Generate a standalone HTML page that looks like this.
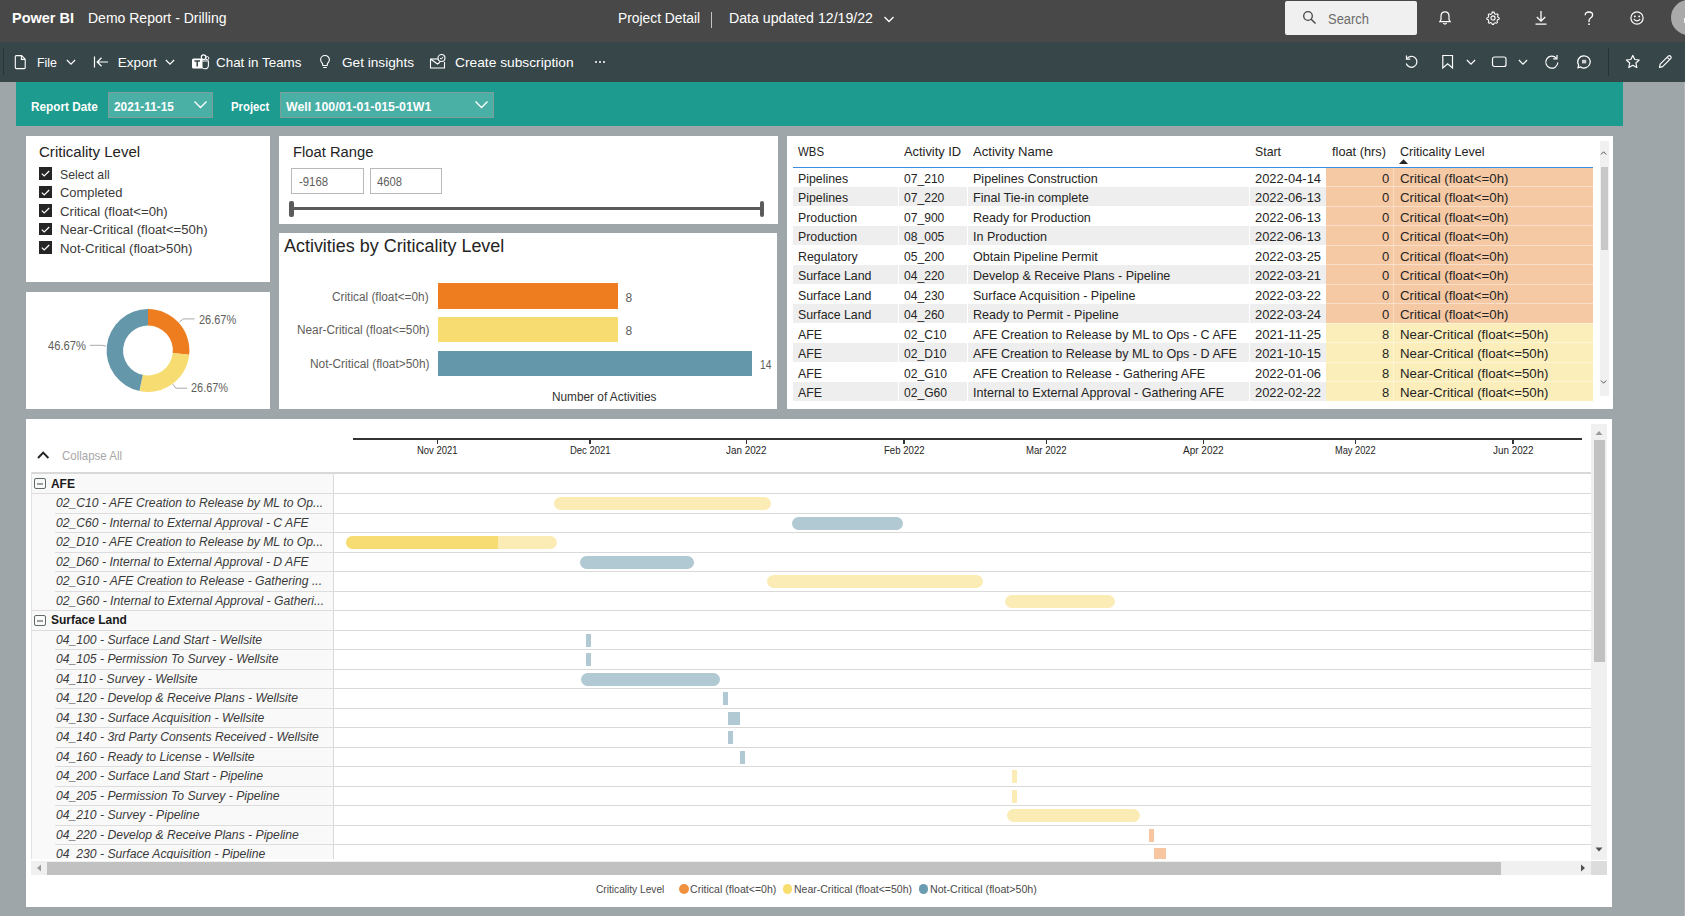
<!DOCTYPE html>
<html><head><meta charset="utf-8"><title>Power BI - Demo Report - Drilling</title>
<style>
html,body{margin:0;padding:0;}
body{width:1685px;height:916px;position:relative;overflow:hidden;background:#9ea6a9;font-family:"Liberation Sans",sans-serif;}
svg{position:absolute;overflow:visible;}
</style></head><body>
<div style="position:absolute;left:0px;top:0px;width:1685px;height:42px;background:#484848;"></div>
<div style="position:absolute;left:710.6px;top:12px;width:1.5px;height:15.5px;background:#c4c4c4;"></div>
<svg style="left:883px;top:14px" width="12" height="10"><path d="M1.5 3 L6 7.5 L10.5 3" fill="none" stroke="#fff" stroke-width="1.3"/></svg>
<div style="position:absolute;left:1285.3px;top:1.2px;width:131.7px;height:33.7px;background:#f0f0f0;border-radius:2px;"></div>
<svg style="left:1302px;top:10px" width="16" height="16"><circle cx="6" cy="6" r="4.3" fill="none" stroke="#444" stroke-width="1.3"/><path d="M9.2 9.2 L13.5 13.5" stroke="#444" stroke-width="1.4"/></svg>
<svg style="left:1437px;top:10px" width="16" height="16"><path d="M8 1.8 C5.2 1.8 4 3.8 4 6.2 L4 9.5 L2.8 11.6 L13.2 11.6 L12 9.5 L12 6.2 C12 3.8 10.8 1.8 8 1.8 Z" fill="none" stroke="#ffffff" stroke-width="1.2"/><path d="M6.3 13.2 Q8 15 9.7 13.2" fill="none" stroke="#ffffff" stroke-width="1.2"/></svg>
<svg style="left:1485px;top:10px" width="16" height="16" viewBox="-0.5 -0.5 17 17"><circle cx="8" cy="8" r="2.2" fill="none" stroke="#ffffff" stroke-width="1.2"/><path d="M8 1.5 L9.3 1.8 L9.6 3.4 L11 4.2 L12.5 3.6 L13.5 4.7 L12.9 6.2 L13.5 7.5 L14.6 8 L14.5 9.3 L12.9 9.8 L12.2 11.2 L12.8 12.7 L11.8 13.6 L10.3 13 L9 13.7 L8.6 15 L7.3 15 L6.9 13.6 L5.5 12.9 L4 13.6 L3 12.6 L3.6 11.1 L2.9 9.8 L1.4 9.3 L1.4 8 L2.9 7.4 L3.5 6 L2.9 4.6 L3.9 3.6 L5.4 4.2 L6.8 3.4 L7 1.8 Z" fill="none" stroke="#ffffff" stroke-width="1.1"/></svg>
<svg style="left:1533px;top:9px" width="16" height="18"><path d="M8 2 L8 12 M3.8 8 L8 12.2 L12.2 8 M2.5 15.2 L13.5 15.2" fill="none" stroke="#ffffff" stroke-width="1.3"/></svg>
<svg style="left:1582px;top:10px" width="14" height="16"><path d="M3.2 5.2 Q3.2 2 7 2 Q10.6 2 10.6 5 Q10.6 6.8 8.6 8 Q7 9 7 10.8 L7 12" fill="none" stroke="#ffffff" stroke-width="1.3"/><circle cx="7" cy="14.2" r="0.9" fill="#ffffff"/></svg>
<svg style="left:1629px;top:10px" width="17" height="17"><circle cx="8" cy="8" r="6.1" fill="none" stroke="#ffffff" stroke-width="1.2"/><circle cx="5.8" cy="6.4" r="0.9" fill="#ffffff"/><circle cx="10.2" cy="6.4" r="0.9" fill="#ffffff"/><path d="M4.8 9.2 Q8 12.6 11.2 9.2" fill="none" stroke="#ffffff" stroke-width="1.2"/></svg>
<div style="position:absolute;left:1670.8px;top:0.4px;width:35px;height:35px;border-radius:50%;background:#aaaaaa"></div>
<div style="position:absolute;left:1683.5px;top:18px;width:2px;height:5px;background:#f4f4f4;"></div>
<div style="position:absolute;left:0px;top:42px;width:1685px;height:40px;background:#374649;"></div>
<div style="position:absolute;left:3px;top:48px;width:1px;height:27px;background:#2a3437;"></div>
<svg style="left:14px;top:54px" width="14" height="16"><path d="M1.3 2.6 Q1.3 1.6 2.3 1.6 L7.6 1.6 L11.2 5.2 L11.2 13.6 Q11.2 14.6 10.2 14.6 L2.3 14.6 Q1.3 14.6 1.3 13.6 Z M7.4 1.6 L7.4 5.4 L11.2 5.4" fill="none" stroke="#ffffff" stroke-width="1.1"/></svg>
<svg style="left:65px;top:57px" width="12" height="10"><path d="M1.9 3 L6 7.2 L10.1 3" fill="none" stroke="#ffffff" stroke-width="1.15"/></svg>
<svg style="left:92px;top:55px" width="18" height="14"><path d="M2.5 1.5 L2.5 12.5 M16 7 L5 7 M9.5 2.8 L5.2 7 L9.5 11.2" fill="none" stroke="#ffffff" stroke-width="1.2"/></svg>
<svg style="left:164px;top:57px" width="12" height="10"><path d="M1.9 3 L6 7.2 L10.1 3" fill="none" stroke="#ffffff" stroke-width="1.15"/></svg>
<svg style="left:191px;top:53px" width="19" height="18"><circle cx="12.6" cy="4.2" r="2.3" fill="none" stroke="#ffffff" stroke-width="1.1"/><circle cx="16.2" cy="5.2" r="1.6" fill="none" stroke="#ffffff" stroke-width="1"/><path d="M10.5 8 L17.4 8 L17.4 12.2 Q17.4 15.8 14 15.8 Q11.6 15.8 10.6 14" fill="none" stroke="#ffffff" stroke-width="1.1"/><rect x="1" y="5.5" width="10.5" height="10" rx="1.5" fill="#ffffff"/><path d="M3.4 8 L9 8 M6.2 8 L6.2 13.5" stroke="#374649" stroke-width="1.5"/></svg>
<svg style="left:318px;top:54px" width="14" height="16"><path d="M7 1.5 C4.3 1.5 2.6 3.5 2.6 5.8 C2.6 7.6 3.7 8.6 4.5 9.6 L4.8 11.5 L9.2 11.5 L9.5 9.6 C10.3 8.6 11.4 7.6 11.4 5.8 C11.4 3.5 9.7 1.5 7 1.5 Z M5.2 13.5 L8.8 13.5" fill="none" stroke="#ffffff" stroke-width="1.1"/></svg>
<svg style="left:429px;top:53px" width="18" height="17"><path d="M1.5 6 L1.5 15 L15.5 15 L15.5 9 M1.5 6 L8.5 11 L11 9.2" fill="none" stroke="#ffffff" stroke-width="1.1"/><path d="M1.5 6 L9 6" stroke="#ffffff" stroke-width="1.1"/><circle cx="12.5" cy="5" r="3.5" fill="none" stroke="#ffffff" stroke-width="1.1"/><path d="M11 5 L12.3 6.2 L14.2 3.8" fill="none" stroke="#ffffff" stroke-width="1"/></svg>
<div style="position:absolute;left:595.2px;top:60.8px;width:2px;height:2px;background:#ffffff;border-radius:50%;"></div>
<div style="position:absolute;left:599.2px;top:60.8px;width:2px;height:2px;background:#ffffff;border-radius:50%;"></div>
<div style="position:absolute;left:603.2px;top:60.8px;width:2px;height:2px;background:#ffffff;border-radius:50%;"></div>
<svg style="left:1403px;top:54px" width="18" height="16"><path d="M4 4.5 A5.5 5.5 0 1 1 3.2 9.5" fill="none" stroke="#ffffff" stroke-width="1.2"/><path d="M3.5 1.5 L3.5 5.2 L7.2 5.2" fill="none" stroke="#ffffff" stroke-width="1.2"/></svg>
<svg style="left:1441px;top:54px" width="14" height="16"><path d="M1.8 1.5 L11.5 1.5 L11.5 14 L6.65 9.8 L1.8 14 Z" fill="none" stroke="#ffffff" stroke-width="1.2"/></svg>
<svg style="left:1465px;top:57px" width="12" height="10"><path d="M1.9 3 L6 7.2 L10.1 3" fill="none" stroke="#ffffff" stroke-width="1.15"/></svg>
<svg style="left:1491px;top:55px" width="18" height="14"><rect x="1.5" y="2" width="13.5" height="9.5" rx="2" fill="none" stroke="#ffffff" stroke-width="1.2"/></svg>
<svg style="left:1517px;top:57px" width="12" height="10"><path d="M1.9 3 L6 7.2 L10.1 3" fill="none" stroke="#ffffff" stroke-width="1.15"/></svg>
<svg style="left:1544px;top:54px" width="16" height="16"><path d="M12.3 4.2 A6 6 0 1 0 13.8 8.5" fill="none" stroke="#ffffff" stroke-width="1.2"/><path d="M13 1 L13 4.8 L9.2 4.8" fill="none" stroke="#ffffff" stroke-width="1.2"/></svg>
<svg style="left:1576px;top:54px" width="16" height="16"><path d="M8 1.8 A6.1 6.1 0 1 1 4.6 12.9 L1.8 13.9 L2.7 11.2 A6.1 6.1 0 0 1 8 1.8 Z" fill="none" stroke="#ffffff" stroke-width="1.2" stroke-linejoin="round"/><rect x="6" y="5.8" width="4.2" height="3.6" fill="#cfcfcf"/></svg>
<div style="position:absolute;left:1608px;top:48px;width:1px;height:27.5px;background:#283336;"></div>
<svg style="left:1624px;top:53px" width="18" height="17"><path d="M8.8 2.4 L10.8 6.5 L15.2 7 L11.9 10 L12.8 14.5 L8.8 12.3 L4.8 14.5 L5.7 10 L2.4 7 L6.8 6.5 Z" fill="none" stroke="#ffffff" stroke-width="1.2" stroke-linejoin="round"/></svg>
<svg style="left:1657px;top:54px" width="16" height="16"><path d="M2.5 13.5 L3.2 10.2 L11.5 1.9 Q12.5 1.2 13.6 2.2 Q14.6 3.3 13.9 4.3 L5.6 12.6 Z M10.2 3.3 L12.6 5.7" fill="none" stroke="#ffffff" stroke-width="1.2" stroke-linejoin="round"/></svg>
<div style="position:absolute;left:16px;top:82px;width:1607px;height:44px;background:#1c9b8e;"></div>
<div style="position:absolute;left:107.5px;top:92px;width:105px;height:25.5px;background:#4aafa5;box-sizing:border-box;border:1.5px solid #7f9e9b;"></div>
<svg style="left:193px;top:99px" width="16" height="12"><path d="M1.5 2.5 L7.5 8.5 L13.5 2.5" fill="none" stroke="#ffffff" stroke-width="1.3"/></svg>
<div style="position:absolute;left:280px;top:92px;width:214px;height:25.5px;background:#4aafa5;box-sizing:border-box;border:1.5px solid #7f9e9b;"></div>
<svg style="left:474px;top:99px" width="16" height="12"><path d="M1.5 2.5 L7.5 8.5 L13.5 2.5" fill="none" stroke="#ffffff" stroke-width="1.3"/></svg>
<div style="position:absolute;left:26px;top:136px;width:244px;height:146px;background:#ffffff;"></div>
<div style="position:absolute;left:26px;top:292px;width:244px;height:117px;background:#ffffff;"></div>
<div style="position:absolute;left:279px;top:136px;width:499px;height:88px;background:#ffffff;"></div>
<div style="position:absolute;left:279px;top:233px;width:498px;height:176px;background:#ffffff;"></div>
<div style="position:absolute;left:787px;top:136px;width:826px;height:273px;background:#ffffff;"></div>
<div style="position:absolute;left:26px;top:419px;width:1586px;height:488px;background:#ffffff;"></div>
<div style="position:absolute;left:38.8px;top:167.2px;width:12.8px;height:12.5px;background:#252525;"></div>
<svg style="left:38.8px;top:167.2px" width="13" height="13"><path d="M2.8 6.6 L5.2 9 L10.2 4" fill="none" stroke="#fff" stroke-width="1.2"/></svg>
<div style="position:absolute;left:38.8px;top:185.7px;width:12.8px;height:12.5px;background:#252525;"></div>
<svg style="left:38.8px;top:185.7px" width="13" height="13"><path d="M2.8 6.6 L5.2 9 L10.2 4" fill="none" stroke="#fff" stroke-width="1.2"/></svg>
<div style="position:absolute;left:38.8px;top:204.2px;width:12.8px;height:12.5px;background:#252525;"></div>
<svg style="left:38.8px;top:204.2px" width="13" height="13"><path d="M2.8 6.6 L5.2 9 L10.2 4" fill="none" stroke="#fff" stroke-width="1.2"/></svg>
<div style="position:absolute;left:38.8px;top:222.7px;width:12.8px;height:12.5px;background:#252525;"></div>
<svg style="left:38.8px;top:222.7px" width="13" height="13"><path d="M2.8 6.6 L5.2 9 L10.2 4" fill="none" stroke="#fff" stroke-width="1.2"/></svg>
<div style="position:absolute;left:38.8px;top:241.2px;width:12.8px;height:12.5px;background:#252525;"></div>
<svg style="left:38.8px;top:241.2px" width="13" height="13"><path d="M2.8 6.6 L5.2 9 L10.2 4" fill="none" stroke="#fff" stroke-width="1.2"/></svg>
<svg style="left:0;top:0" width="300" height="420"><path d="M148.00 309.10 A41.4 41.4 0 0 1 189.17 354.83 L172.76 353.10 A24.9 24.9 0 0 0 148.00 325.60 Z" fill="#ee7d20"/><path d="M189.17 354.83 A41.4 41.4 0 0 1 139.39 391.00 L142.82 374.86 A24.9 24.9 0 0 0 172.76 353.10 Z" fill="#f7dc72"/><path d="M139.39 391.00 A41.4 41.4 0 0 1 148.00 309.10 L148.00 325.60 A24.9 24.9 0 0 0 142.82 374.86 Z" fill="#6597aa"/><path d="M179.6 321.8 L183.3 318.9 L194.5 318.9 M106 346.1 L102.3 345.3 L89.8 345.3 M172.7 384.1 L175.8 388.2 L187 388.2" fill="none" stroke="#aaaaaa" stroke-width="1"/></svg>
<div style="position:absolute;left:291.4px;top:168.2px;width:72.3px;height:25.5px;background:#ffffff;box-sizing:border-box;border:1.5px solid #b9b9b9;"></div>
<div style="position:absolute;left:369.5px;top:168.2px;width:72.2px;height:25.5px;background:#ffffff;box-sizing:border-box;border:1.5px solid #b9b9b9;"></div>
<div style="position:absolute;left:290px;top:207px;width:472px;height:3px;background:#5b5b5b;"></div>
<div style="position:absolute;left:289.2px;top:200.5px;width:4.5px;height:16px;background:#5b5b5b;border-radius:2px;"></div>
<div style="position:absolute;left:759.5px;top:200.5px;width:4.5px;height:16px;background:#5b5b5b;border-radius:2px;"></div>
<div style="position:absolute;left:438.1px;top:283.4px;width:179.6px;height:25.6px;background:#ee7d20;"></div>
<div style="position:absolute;left:438.1px;top:317.4px;width:179.6px;height:25.0px;background:#f7dc72;"></div>
<div style="position:absolute;left:438.1px;top:351px;width:314.2px;height:24.8px;background:#6597aa;"></div>
<svg style="left:1398px;top:158px" width="12" height="7"><path d="M1 6 L5.5 1.2 L10 6 Z" fill="#252423"/></svg>
<div style="position:absolute;left:1326.3px;top:167.2px;width:266.70000000000005px;height:19.5px;background:#f6c9a5;"></div>
<div style="position:absolute;left:1393px;top:167.2px;width:1px;height:19.5px;background:rgba(255,255,255,0.35);"></div>
<div style="position:absolute;left:793px;top:186.7px;width:533.3px;height:19.5px;background:#eeeeee;"></div>
<div style="position:absolute;left:898px;top:186.7px;width:1px;height:19.5px;background:#ffffff;"></div>
<div style="position:absolute;left:966.8px;top:186.7px;width:1px;height:19.5px;background:#ffffff;"></div>
<div style="position:absolute;left:1249.2px;top:186.7px;width:1px;height:19.5px;background:#ffffff;"></div>
<div style="position:absolute;left:1326.3px;top:186.7px;width:266.70000000000005px;height:19.5px;background:#f6c9a5;"></div>
<div style="position:absolute;left:1393px;top:186.7px;width:1px;height:19.5px;background:rgba(255,255,255,0.35);"></div>
<div style="position:absolute;left:1326.3px;top:186.2px;width:266.70000000000005px;height:1px;background:rgba(255,255,255,0.4);"></div>
<div style="position:absolute;left:1326.3px;top:206.2px;width:266.70000000000005px;height:19.5px;background:#f6c9a5;"></div>
<div style="position:absolute;left:1393px;top:206.2px;width:1px;height:19.5px;background:rgba(255,255,255,0.35);"></div>
<div style="position:absolute;left:1326.3px;top:205.7px;width:266.70000000000005px;height:1px;background:rgba(255,255,255,0.4);"></div>
<div style="position:absolute;left:793px;top:225.7px;width:533.3px;height:19.5px;background:#eeeeee;"></div>
<div style="position:absolute;left:898px;top:225.7px;width:1px;height:19.5px;background:#ffffff;"></div>
<div style="position:absolute;left:966.8px;top:225.7px;width:1px;height:19.5px;background:#ffffff;"></div>
<div style="position:absolute;left:1249.2px;top:225.7px;width:1px;height:19.5px;background:#ffffff;"></div>
<div style="position:absolute;left:1326.3px;top:225.7px;width:266.70000000000005px;height:19.5px;background:#f6c9a5;"></div>
<div style="position:absolute;left:1393px;top:225.7px;width:1px;height:19.5px;background:rgba(255,255,255,0.35);"></div>
<div style="position:absolute;left:1326.3px;top:225.2px;width:266.70000000000005px;height:1px;background:rgba(255,255,255,0.4);"></div>
<div style="position:absolute;left:1326.3px;top:245.2px;width:266.70000000000005px;height:19.5px;background:#f6c9a5;"></div>
<div style="position:absolute;left:1393px;top:245.2px;width:1px;height:19.5px;background:rgba(255,255,255,0.35);"></div>
<div style="position:absolute;left:1326.3px;top:244.7px;width:266.70000000000005px;height:1px;background:rgba(255,255,255,0.4);"></div>
<div style="position:absolute;left:793px;top:264.7px;width:533.3px;height:19.5px;background:#eeeeee;"></div>
<div style="position:absolute;left:898px;top:264.7px;width:1px;height:19.5px;background:#ffffff;"></div>
<div style="position:absolute;left:966.8px;top:264.7px;width:1px;height:19.5px;background:#ffffff;"></div>
<div style="position:absolute;left:1249.2px;top:264.7px;width:1px;height:19.5px;background:#ffffff;"></div>
<div style="position:absolute;left:1326.3px;top:264.7px;width:266.70000000000005px;height:19.5px;background:#f6c9a5;"></div>
<div style="position:absolute;left:1393px;top:264.7px;width:1px;height:19.5px;background:rgba(255,255,255,0.35);"></div>
<div style="position:absolute;left:1326.3px;top:264.2px;width:266.70000000000005px;height:1px;background:rgba(255,255,255,0.4);"></div>
<div style="position:absolute;left:1326.3px;top:284.2px;width:266.70000000000005px;height:19.5px;background:#f6c9a5;"></div>
<div style="position:absolute;left:1393px;top:284.2px;width:1px;height:19.5px;background:rgba(255,255,255,0.35);"></div>
<div style="position:absolute;left:1326.3px;top:283.7px;width:266.70000000000005px;height:1px;background:rgba(255,255,255,0.4);"></div>
<div style="position:absolute;left:793px;top:303.7px;width:533.3px;height:19.5px;background:#eeeeee;"></div>
<div style="position:absolute;left:898px;top:303.7px;width:1px;height:19.5px;background:#ffffff;"></div>
<div style="position:absolute;left:966.8px;top:303.7px;width:1px;height:19.5px;background:#ffffff;"></div>
<div style="position:absolute;left:1249.2px;top:303.7px;width:1px;height:19.5px;background:#ffffff;"></div>
<div style="position:absolute;left:1326.3px;top:303.7px;width:266.70000000000005px;height:19.5px;background:#f6c9a5;"></div>
<div style="position:absolute;left:1393px;top:303.7px;width:1px;height:19.5px;background:rgba(255,255,255,0.35);"></div>
<div style="position:absolute;left:1326.3px;top:303.2px;width:266.70000000000005px;height:1px;background:rgba(255,255,255,0.4);"></div>
<div style="position:absolute;left:1326.3px;top:323.2px;width:266.70000000000005px;height:19.5px;background:#fbeebb;"></div>
<div style="position:absolute;left:1393px;top:323.2px;width:1px;height:19.5px;background:rgba(255,255,255,0.35);"></div>
<div style="position:absolute;left:1326.3px;top:322.7px;width:266.70000000000005px;height:1px;background:rgba(255,255,255,0.4);"></div>
<div style="position:absolute;left:793px;top:342.7px;width:533.3px;height:19.5px;background:#eeeeee;"></div>
<div style="position:absolute;left:898px;top:342.7px;width:1px;height:19.5px;background:#ffffff;"></div>
<div style="position:absolute;left:966.8px;top:342.7px;width:1px;height:19.5px;background:#ffffff;"></div>
<div style="position:absolute;left:1249.2px;top:342.7px;width:1px;height:19.5px;background:#ffffff;"></div>
<div style="position:absolute;left:1326.3px;top:342.7px;width:266.70000000000005px;height:19.5px;background:#fbeebb;"></div>
<div style="position:absolute;left:1393px;top:342.7px;width:1px;height:19.5px;background:rgba(255,255,255,0.35);"></div>
<div style="position:absolute;left:1326.3px;top:342.2px;width:266.70000000000005px;height:1px;background:rgba(255,255,255,0.4);"></div>
<div style="position:absolute;left:1326.3px;top:362.2px;width:266.70000000000005px;height:19.5px;background:#fbeebb;"></div>
<div style="position:absolute;left:1393px;top:362.2px;width:1px;height:19.5px;background:rgba(255,255,255,0.35);"></div>
<div style="position:absolute;left:1326.3px;top:361.7px;width:266.70000000000005px;height:1px;background:rgba(255,255,255,0.4);"></div>
<div style="position:absolute;left:793px;top:381.7px;width:533.3px;height:19.5px;background:#eeeeee;"></div>
<div style="position:absolute;left:898px;top:381.7px;width:1px;height:19.5px;background:#ffffff;"></div>
<div style="position:absolute;left:966.8px;top:381.7px;width:1px;height:19.5px;background:#ffffff;"></div>
<div style="position:absolute;left:1249.2px;top:381.7px;width:1px;height:19.5px;background:#ffffff;"></div>
<div style="position:absolute;left:1326.3px;top:381.7px;width:266.70000000000005px;height:19.5px;background:#fbeebb;"></div>
<div style="position:absolute;left:1393px;top:381.7px;width:1px;height:19.5px;background:rgba(255,255,255,0.35);"></div>
<div style="position:absolute;left:1326.3px;top:381.2px;width:266.70000000000005px;height:1px;background:rgba(255,255,255,0.4);"></div>
<div style="position:absolute;left:793px;top:166.8px;width:800px;height:1.6px;background:#3a8ee0;"></div>
<div style="position:absolute;left:1684px;top:82px;width:1px;height:834px;background:#b2b4b5;"></div>
<div style="position:absolute;left:1599.5px;top:141px;width:9.2px;height:255px;background:#f0f0f0;"></div>
<div style="position:absolute;left:1600.5px;top:167.3px;width:7.2px;height:82.5px;background:#c8c8c8;"></div>
<svg style="left:1599px;top:149px" width="10" height="8"><path d="M2 5.5 L4.6 2.8 L7.2 5.5" fill="none" stroke="#555" stroke-width="1"/></svg>
<svg style="left:1599px;top:378px" width="10" height="8"><path d="M2 2.5 L4.6 5.2 L7.2 2.5" fill="none" stroke="#555" stroke-width="1"/></svg>
<div style="position:absolute;left:31px;top:472px;width:302px;height:387px;background:#f9f9f9;"></div>
<svg style="left:36px;top:450px" width="15" height="10"><path d="M2 8 L7.2 2.6 L12.4 8" fill="none" stroke="#252525" stroke-width="2"/></svg>
<div style="position:absolute;left:353px;top:437.8px;width:1229px;height:1.8px;background:#333333;"></div>
<div style="position:absolute;left:436.9px;top:438px;width:1.3px;height:5.5px;background:#333333;"></div>
<div style="position:absolute;left:589.3px;top:438px;width:1.3px;height:5.5px;background:#333333;"></div>
<div style="position:absolute;left:746.1px;top:438px;width:1.3px;height:5.5px;background:#333333;"></div>
<div style="position:absolute;left:903.4px;top:438px;width:1.3px;height:5.5px;background:#333333;"></div>
<div style="position:absolute;left:1045.7px;top:438px;width:1.3px;height:5.5px;background:#333333;"></div>
<div style="position:absolute;left:1202.7px;top:438px;width:1.3px;height:5.5px;background:#333333;"></div>
<div style="position:absolute;left:1355.1000000000001px;top:438px;width:1.3px;height:5.5px;background:#333333;"></div>
<div style="position:absolute;left:1512.4px;top:438px;width:1.3px;height:5.5px;background:#333333;"></div>
<div style="position:absolute;left:31px;top:472px;width:1560px;height:387px;overflow:hidden"><div style="position:absolute;left:0.00px;top:0.00px;width:1560.00px;height:2.00px;background:#d9d9d9;"></div><div style="position:absolute;left:0.00px;top:21.00px;width:302.00px;height:1.00px;background:#dddddd;"></div><div style="position:absolute;left:302.00px;top:21.00px;width:1258.00px;height:1.00px;background:#d9d9d9;"></div><div style="position:absolute;left:24.00px;top:41.00px;width:278.00px;height:1.00px;background:#dddddd;"></div><div style="position:absolute;left:302.00px;top:41.00px;width:1258.00px;height:1.00px;background:#d9d9d9;"></div><div style="position:absolute;left:24.00px;top:60.00px;width:278.00px;height:1.00px;background:#dddddd;"></div><div style="position:absolute;left:302.00px;top:60.00px;width:1258.00px;height:1.00px;background:#d9d9d9;"></div><div style="position:absolute;left:24.00px;top:80.00px;width:278.00px;height:1.00px;background:#dddddd;"></div><div style="position:absolute;left:302.00px;top:80.00px;width:1258.00px;height:1.00px;background:#d9d9d9;"></div><div style="position:absolute;left:24.00px;top:99.00px;width:278.00px;height:1.00px;background:#dddddd;"></div><div style="position:absolute;left:302.00px;top:99.00px;width:1258.00px;height:1.00px;background:#d9d9d9;"></div><div style="position:absolute;left:24.00px;top:119.00px;width:278.00px;height:1.00px;background:#dddddd;"></div><div style="position:absolute;left:302.00px;top:119.00px;width:1258.00px;height:1.00px;background:#d9d9d9;"></div><div style="position:absolute;left:0.00px;top:138.00px;width:302.00px;height:1.00px;background:#dddddd;"></div><div style="position:absolute;left:302.00px;top:138.00px;width:1258.00px;height:1.00px;background:#d9d9d9;"></div><div style="position:absolute;left:0.00px;top:158.00px;width:302.00px;height:1.00px;background:#dddddd;"></div><div style="position:absolute;left:302.00px;top:158.00px;width:1258.00px;height:1.00px;background:#d9d9d9;"></div><div style="position:absolute;left:24.00px;top:177.00px;width:278.00px;height:1.00px;background:#dddddd;"></div><div style="position:absolute;left:302.00px;top:177.00px;width:1258.00px;height:1.00px;background:#d9d9d9;"></div><div style="position:absolute;left:24.00px;top:197.00px;width:278.00px;height:1.00px;background:#dddddd;"></div><div style="position:absolute;left:302.00px;top:197.00px;width:1258.00px;height:1.00px;background:#d9d9d9;"></div><div style="position:absolute;left:24.00px;top:216.00px;width:278.00px;height:1.00px;background:#dddddd;"></div><div style="position:absolute;left:302.00px;top:216.00px;width:1258.00px;height:1.00px;background:#d9d9d9;"></div><div style="position:absolute;left:24.00px;top:236.00px;width:278.00px;height:1.00px;background:#dddddd;"></div><div style="position:absolute;left:302.00px;top:236.00px;width:1258.00px;height:1.00px;background:#d9d9d9;"></div><div style="position:absolute;left:24.00px;top:255.00px;width:278.00px;height:1.00px;background:#dddddd;"></div><div style="position:absolute;left:302.00px;top:255.00px;width:1258.00px;height:1.00px;background:#d9d9d9;"></div><div style="position:absolute;left:24.00px;top:275.00px;width:278.00px;height:1.00px;background:#dddddd;"></div><div style="position:absolute;left:302.00px;top:275.00px;width:1258.00px;height:1.00px;background:#d9d9d9;"></div><div style="position:absolute;left:24.00px;top:294.00px;width:278.00px;height:1.00px;background:#dddddd;"></div><div style="position:absolute;left:302.00px;top:294.00px;width:1258.00px;height:1.00px;background:#d9d9d9;"></div><div style="position:absolute;left:24.00px;top:314.00px;width:278.00px;height:1.00px;background:#dddddd;"></div><div style="position:absolute;left:302.00px;top:314.00px;width:1258.00px;height:1.00px;background:#d9d9d9;"></div><div style="position:absolute;left:24.00px;top:333.00px;width:278.00px;height:1.00px;background:#dddddd;"></div><div style="position:absolute;left:302.00px;top:333.00px;width:1258.00px;height:1.00px;background:#d9d9d9;"></div><div style="position:absolute;left:24.00px;top:353.00px;width:278.00px;height:1.00px;background:#dddddd;"></div><div style="position:absolute;left:302.00px;top:353.00px;width:1258.00px;height:1.00px;background:#d9d9d9;"></div><div style="position:absolute;left:24.00px;top:372.00px;width:278.00px;height:1.00px;background:#dddddd;"></div><div style="position:absolute;left:302.00px;top:372.00px;width:1258.00px;height:1.00px;background:#d9d9d9;"></div><div style="position:absolute;left:302.00px;top:0.00px;width:1.00px;height:387.00px;background:#dadada;"></div><div style="position:absolute;left:0.00px;top:0.00px;width:1.00px;height:387.00px;background:#e2e2e2;"></div><div style="position:absolute;left:522.90px;top:25.00px;width:216.70px;height:13.00px;background:#fbecb6;border-radius:6.5px;"></div><div style="position:absolute;left:761.40px;top:45.00px;width:110.20px;height:13.00px;background:#b0c9d3;border-radius:6.5px;"></div><div style="position:absolute;left:314.90px;top:64.00px;width:211.50px;height:13.00px;background:#fbecb6;border-radius:6.5px;"></div><div style="position:absolute;left:548.70px;top:84.00px;width:114.50px;height:13.00px;background:#b0c9d3;border-radius:6.5px;"></div><div style="position:absolute;left:736.40px;top:103.00px;width:215.90px;height:13.00px;background:#fbecb6;border-radius:6.5px;"></div><div style="position:absolute;left:973.90px;top:123.00px;width:110.10px;height:13.00px;background:#fbecb6;border-radius:6.5px;"></div><div style="position:absolute;left:555.00px;top:162.00px;width:5.20px;height:13.00px;background:#b0c9d3;"></div><div style="position:absolute;left:555.00px;top:181.00px;width:5.20px;height:13.00px;background:#b0c9d3;"></div><div style="position:absolute;left:550.30px;top:201.00px;width:138.40px;height:13.00px;background:#b0c9d3;border-radius:6.5px;"></div><div style="position:absolute;left:692.20px;top:220.00px;width:5.00px;height:13.00px;background:#b0c9d3;"></div><div style="position:absolute;left:697.20px;top:240.00px;width:11.70px;height:13.00px;background:#b0c9d3;"></div><div style="position:absolute;left:697.20px;top:259.00px;width:5.00px;height:13.00px;background:#b0c9d3;"></div><div style="position:absolute;left:708.90px;top:279.00px;width:4.90px;height:13.00px;background:#b0c9d3;"></div><div style="position:absolute;left:981.00px;top:298.00px;width:5.40px;height:13.00px;background:#fbecb6;"></div><div style="position:absolute;left:981.00px;top:318.00px;width:5.40px;height:13.00px;background:#fbecb6;"></div><div style="position:absolute;left:976.40px;top:337.00px;width:133.00px;height:13.00px;background:#fbecb6;border-radius:6.5px;"></div><div style="position:absolute;left:1117.70px;top:357.00px;width:5.30px;height:13.00px;background:#f7c6a0;"></div><div style="position:absolute;left:1123.00px;top:376.00px;width:12.00px;height:13.00px;background:#f7c6a0;"></div><div style="position:absolute;left:314.90px;top:64.00px;width:152.00px;height:13.00px;background:#f6dc72;border-radius:6.5px 0 0 6.5px;"></div><div style="position:absolute;left:3.30px;top:6.20px;width:11.50px;height:11.30px;background:transparent;box-sizing:border-box;border:1px solid #5f6b6b;border-radius:2px;"></div><div style="position:absolute;left:6.30px;top:11.40px;width:5.50px;height:1.20px;background:#9aa0a0;"></div><div style="position:absolute;left:19.90px;top:5.84px;font:700 12px 'Liberation Sans';line-height:12px;color:#1a1a1a;white-space:pre">AFE</div><div style="position:absolute;left:24.50px;top:24.74px;font:italic 400 12px 'Liberation Sans';line-height:12px;color:#3a3a3a;white-space:pre;transform:scaleX(1.014);transform-origin:0 0">02_C10 - AFE Creation to Release by ML to Op...</div><div style="position:absolute;left:24.50px;top:44.74px;font:italic 400 12px 'Liberation Sans';line-height:12px;color:#3a3a3a;white-space:pre;transform:scaleX(1.014);transform-origin:0 0">02_C60 - Internal to External Approval - C AFE</div><div style="position:absolute;left:24.50px;top:63.74px;font:italic 400 12px 'Liberation Sans';line-height:12px;color:#3a3a3a;white-space:pre;transform:scaleX(1.014);transform-origin:0 0">02_D10 - AFE Creation to Release by ML to Op...</div><div style="position:absolute;left:24.50px;top:83.74px;font:italic 400 12px 'Liberation Sans';line-height:12px;color:#3a3a3a;white-space:pre;transform:scaleX(1.014);transform-origin:0 0">02_D60 - Internal to External Approval - D AFE</div><div style="position:absolute;left:24.50px;top:102.74px;font:italic 400 12px 'Liberation Sans';line-height:12px;color:#3a3a3a;white-space:pre;transform:scaleX(1.014);transform-origin:0 0">02_G10 - AFE Creation to Release - Gathering ...</div><div style="position:absolute;left:24.50px;top:122.74px;font:italic 400 12px 'Liberation Sans';line-height:12px;color:#3a3a3a;white-space:pre;transform:scaleX(1.014);transform-origin:0 0">02_G60 - Internal to External Approval - Gatheri...</div><div style="position:absolute;left:3.30px;top:143.20px;width:11.50px;height:11.30px;background:transparent;box-sizing:border-box;border:1px solid #5f6b6b;border-radius:2px;"></div><div style="position:absolute;left:6.30px;top:148.40px;width:5.50px;height:1.20px;background:#9aa0a0;"></div><div style="position:absolute;left:19.90px;top:142.44px;font:700 12px 'Liberation Sans';line-height:12px;color:#1a1a1a;white-space:pre">Surface Land</div><div style="position:absolute;left:24.50px;top:161.74px;font:italic 400 12px 'Liberation Sans';line-height:12px;color:#3a3a3a;white-space:pre;transform:scaleX(1.014);transform-origin:0 0">04_100 - Surface Land Start - Wellsite</div><div style="position:absolute;left:24.50px;top:180.74px;font:italic 400 12px 'Liberation Sans';line-height:12px;color:#3a3a3a;white-space:pre;transform:scaleX(1.014);transform-origin:0 0">04_105 - Permission To Survey - Wellsite</div><div style="position:absolute;left:24.50px;top:200.74px;font:italic 400 12px 'Liberation Sans';line-height:12px;color:#3a3a3a;white-space:pre;transform:scaleX(1.014);transform-origin:0 0">04_110 - Survey - Wellsite</div><div style="position:absolute;left:24.50px;top:219.74px;font:italic 400 12px 'Liberation Sans';line-height:12px;color:#3a3a3a;white-space:pre;transform:scaleX(1.014);transform-origin:0 0">04_120 - Develop &amp; Receive Plans - Wellsite</div><div style="position:absolute;left:24.50px;top:239.74px;font:italic 400 12px 'Liberation Sans';line-height:12px;color:#3a3a3a;white-space:pre;transform:scaleX(1.014);transform-origin:0 0">04_130 - Surface Acquisition - Wellsite</div><div style="position:absolute;left:24.50px;top:258.74px;font:italic 400 12px 'Liberation Sans';line-height:12px;color:#3a3a3a;white-space:pre;transform:scaleX(1.014);transform-origin:0 0">04_140 - 3rd Party Consents Received - Wellsite</div><div style="position:absolute;left:24.50px;top:278.74px;font:italic 400 12px 'Liberation Sans';line-height:12px;color:#3a3a3a;white-space:pre;transform:scaleX(1.014);transform-origin:0 0">04_160 - Ready to License - Wellsite</div><div style="position:absolute;left:24.50px;top:297.74px;font:italic 400 12px 'Liberation Sans';line-height:12px;color:#3a3a3a;white-space:pre;transform:scaleX(1.014);transform-origin:0 0">04_200 - Surface Land Start - Pipeline</div><div style="position:absolute;left:24.50px;top:317.74px;font:italic 400 12px 'Liberation Sans';line-height:12px;color:#3a3a3a;white-space:pre;transform:scaleX(1.014);transform-origin:0 0">04_205 - Permission To Survey - Pipeline</div><div style="position:absolute;left:24.50px;top:336.74px;font:italic 400 12px 'Liberation Sans';line-height:12px;color:#3a3a3a;white-space:pre;transform:scaleX(1.014);transform-origin:0 0">04_210 - Survey - Pipeline</div><div style="position:absolute;left:24.50px;top:356.74px;font:italic 400 12px 'Liberation Sans';line-height:12px;color:#3a3a3a;white-space:pre;transform:scaleX(1.014);transform-origin:0 0">04_220 - Develop &amp; Receive Plans - Pipeline</div><div style="position:absolute;left:24.50px;top:375.74px;font:italic 400 12px 'Liberation Sans';line-height:12px;color:#3a3a3a;white-space:pre;transform:scaleX(1.014);transform-origin:0 0">04_230 - Surface Acquisition - Pipeline</div></div>
<div style="position:absolute;left:31px;top:860.7px;width:1576px;height:14.6px;background:#f0f0f0;"></div>
<div style="position:absolute;left:46.9px;top:861.5px;width:1454.1px;height:13px;background:#c1c1c1;"></div>
<div style="position:absolute;left:1591px;top:860.7px;width:16px;height:14.6px;background:#dcdcdc;"></div>
<svg style="left:35px;top:863px" width="8" height="10"><path d="M6 1.5 L2 5 L6 8.5 Z" fill="#9a9a9a"/></svg>
<svg style="left:1579px;top:863px" width="8" height="10"><path d="M2 1.5 L6 5 L2 8.5 Z" fill="#505050"/></svg>
<div style="position:absolute;left:1591px;top:424px;width:16px;height:436px;background:#f0f0f0;"></div>
<div style="position:absolute;left:1593.5px;top:440.3px;width:11.5px;height:221.6px;background:#c1c1c1;"></div>
<svg style="left:1594px;top:429px" width="10" height="8"><path d="M1.5 6 L5 2 L8.5 6 Z" fill="#9a9a9a"/></svg>
<svg style="left:1594px;top:846px" width="10" height="8"><path d="M1.5 1.5 L5 5.5 L8.5 1.5 Z" fill="#505050"/></svg>
<div style="position:absolute;left:678.8000000000001px;top:884.2px;width:9.8px;height:9.8px;border-radius:50%;background:#f0913f"></div>
<div style="position:absolute;left:782.7px;top:884.2px;width:9.8px;height:9.8px;border-radius:50%;background:#f8dd70"></div>
<div style="position:absolute;left:918.5px;top:884.2px;width:9.8px;height:9.8px;border-radius:50%;background:#6a9bb0"></div>
<div style="position:absolute;left:12.00px;top:11.12px;font:normal 700 14.5px 'Liberation Sans';line-height:14.5px;color:#ffffff;white-space:pre;">Power BI</div>
<div style="position:absolute;left:88.00px;top:11.45px;font:normal 400 14px 'Liberation Sans';line-height:14px;color:#ffffff;white-space:pre;">Demo Report - Drilling</div>
<div style="position:absolute;left:618.40px;top:11.35px;font:normal 400 14px 'Liberation Sans';line-height:14px;color:#ffffff;white-space:pre;transform:scaleX(0.9872);transform-origin:0 0;">Project Detail</div>
<div style="position:absolute;left:729.00px;top:11.35px;font:normal 400 14px 'Liberation Sans';line-height:14px;color:#ffffff;white-space:pre;transform:scaleX(1.0107);transform-origin:0 0;">Data updated 12/19/22</div>
<div style="position:absolute;left:1328.00px;top:12.15px;font:normal 400 14px 'Liberation Sans';line-height:14px;color:#6b6b6b;white-space:pre;transform:scaleX(0.9243);transform-origin:0 0;">Search</div>
<div style="position:absolute;left:36.50px;top:55.77px;font:normal 400 13.5px 'Liberation Sans';line-height:13.5px;color:#ffffff;white-space:pre;transform:scaleX(0.9189);transform-origin:0 0;">File</div>
<div style="position:absolute;left:117.80px;top:55.77px;font:normal 400 13.5px 'Liberation Sans';line-height:13.5px;color:#ffffff;white-space:pre;">Export</div>
<div style="position:absolute;left:215.50px;top:55.77px;font:normal 400 13.5px 'Liberation Sans';line-height:13.5px;color:#ffffff;white-space:pre;transform:scaleX(0.9936);transform-origin:0 0;">Chat in Teams</div>
<div style="position:absolute;left:342.00px;top:55.77px;font:normal 400 13.5px 'Liberation Sans';line-height:13.5px;color:#ffffff;white-space:pre;transform:scaleX(1.0099);transform-origin:0 0;">Get insights</div>
<div style="position:absolute;left:454.80px;top:55.77px;font:normal 400 13.5px 'Liberation Sans';line-height:13.5px;color:#ffffff;white-space:pre;transform:scaleX(1.0197);transform-origin:0 0;">Create subscription</div>
<div style="position:absolute;left:31.30px;top:100.84px;font:normal 700 12px 'Liberation Sans';line-height:12px;color:#ffffff;white-space:pre;transform:scaleX(0.9807);transform-origin:0 0;">Report Date</div>
<div style="position:absolute;left:113.90px;top:100.84px;font:normal 700 12px 'Liberation Sans';line-height:12px;color:#ffffff;white-space:pre;transform:scaleX(0.9846);transform-origin:0 0;">2021-11-15</div>
<div style="position:absolute;left:231.30px;top:100.84px;font:normal 700 12px 'Liberation Sans';line-height:12px;color:#ffffff;white-space:pre;transform:scaleX(0.9438);transform-origin:0 0;">Project</div>
<div style="position:absolute;left:285.60px;top:100.84px;font:normal 700 12px 'Liberation Sans';line-height:12px;color:#ffffff;white-space:pre;transform:scaleX(1.0297);transform-origin:0 0;">Well 100/01-01-015-01W1</div>
<div style="position:absolute;left:39.40px;top:143.88px;font:normal 400 15.5px 'Liberation Sans';line-height:15.5px;color:#252423;white-space:pre;transform:scaleX(0.9709);transform-origin:0 0;">Criticality Level</div>
<div style="position:absolute;left:59.80px;top:167.99px;font:normal 400 13px 'Liberation Sans';line-height:13px;color:#3b3a39;white-space:pre;transform:scaleX(0.9403);transform-origin:0 0;">Select all</div>
<div style="position:absolute;left:59.80px;top:186.49px;font:normal 400 13px 'Liberation Sans';line-height:13px;color:#3b3a39;white-space:pre;transform:scaleX(0.9940);transform-origin:0 0;">Completed</div>
<div style="position:absolute;left:59.80px;top:204.99px;font:normal 400 13px 'Liberation Sans';line-height:13px;color:#3b3a39;white-space:pre;transform:scaleX(1.0139);transform-origin:0 0;">Critical (float&lt;=0h)</div>
<div style="position:absolute;left:59.80px;top:223.49px;font:normal 400 13px 'Liberation Sans';line-height:13px;color:#3b3a39;white-space:pre;transform:scaleX(1.0113);transform-origin:0 0;">Near-Critical (float&lt;=50h)</div>
<div style="position:absolute;left:59.80px;top:241.99px;font:normal 400 13px 'Liberation Sans';line-height:13px;color:#3b3a39;white-space:pre;transform:scaleX(1.0161);transform-origin:0 0;">Not-Critical (float&gt;50h)</div>
<div style="position:absolute;left:198.50px;top:313.74px;font:normal 400 12px 'Liberation Sans';line-height:12px;color:#605e5c;white-space:pre;transform:scaleX(0.9139);transform-origin:0 0;">26.67%</div>
<div style="position:absolute;left:48.10px;top:340.34px;font:normal 400 12px 'Liberation Sans';line-height:12px;color:#605e5c;white-space:pre;transform:scaleX(0.9287);transform-origin:0 0;">46.67%</div>
<div style="position:absolute;left:191.40px;top:382.34px;font:normal 400 12px 'Liberation Sans';line-height:12px;color:#605e5c;white-space:pre;transform:scaleX(0.9090);transform-origin:0 0;">26.67%</div>
<div style="position:absolute;left:292.70px;top:143.68px;font:normal 400 15.5px 'Liberation Sans';line-height:15.5px;color:#252423;white-space:pre;transform:scaleX(0.9520);transform-origin:0 0;">Float Range</div>
<div style="position:absolute;left:299.10px;top:175.54px;font:normal 400 12px 'Liberation Sans';line-height:12px;color:#605e5c;white-space:pre;transform:scaleX(0.9478);transform-origin:0 0;">-9168</div>
<div style="position:absolute;left:376.50px;top:175.54px;font:normal 400 12px 'Liberation Sans';line-height:12px;color:#605e5c;white-space:pre;transform:scaleX(0.9362);transform-origin:0 0;">4608</div>
<div style="position:absolute;left:284.00px;top:238.38px;font:normal 400 17.5px 'Liberation Sans';line-height:17.5px;color:#252423;white-space:pre;transform:scaleX(1.0250);transform-origin:0 0;">Activities by Criticality Level</div>
<div style="position:absolute;left:332.40px;top:291.14px;font:normal 400 12px 'Liberation Sans';line-height:12px;color:#605e5c;white-space:pre;transform:scaleX(0.9852);transform-origin:0 0;">Critical (float&lt;=0h)</div>
<div style="position:absolute;left:296.50px;top:324.34px;font:normal 400 12px 'Liberation Sans';line-height:12px;color:#605e5c;white-space:pre;transform:scaleX(0.9835);transform-origin:0 0;">Near-Critical (float&lt;=50h)</div>
<div style="position:absolute;left:309.50px;top:357.64px;font:normal 400 12px 'Liberation Sans';line-height:12px;color:#605e5c;white-space:pre;transform:scaleX(0.9927);transform-origin:0 0;">Not-Critical (float&gt;50h)</div>
<div style="position:absolute;left:625.50px;top:292.04px;font:normal 400 12px 'Liberation Sans';line-height:12px;color:#605e5c;white-space:pre;">8</div>
<div style="position:absolute;left:625.50px;top:325.44px;font:normal 400 12px 'Liberation Sans';line-height:12px;color:#605e5c;white-space:pre;">8</div>
<div style="position:absolute;left:760.00px;top:359.04px;font:normal 400 12px 'Liberation Sans';line-height:12px;color:#605e5c;white-space:pre;transform:scaleX(0.8533);transform-origin:0 0;">14</div>
<div style="position:absolute;left:552.30px;top:391.04px;font:normal 400 12px 'Liberation Sans';line-height:12px;color:#323130;white-space:pre;transform:scaleX(0.9854);transform-origin:0 0;">Number of Activities</div>
<div style="position:absolute;left:798.00px;top:144.99px;font:normal 400 13px 'Liberation Sans';line-height:13px;color:#252423;white-space:pre;transform:scaleX(0.8776);transform-origin:0 0;">WBS</div>
<div style="position:absolute;left:903.90px;top:144.99px;font:normal 400 13px 'Liberation Sans';line-height:13px;color:#252423;white-space:pre;transform:scaleX(0.9879);transform-origin:0 0;">Activity ID</div>
<div style="position:absolute;left:972.50px;top:144.99px;font:normal 400 13px 'Liberation Sans';line-height:13px;color:#252423;white-space:pre;transform:scaleX(1.0067);transform-origin:0 0;">Activity Name</div>
<div style="position:absolute;left:1254.70px;top:144.99px;font:normal 400 13px 'Liberation Sans';line-height:13px;color:#252423;white-space:pre;transform:scaleX(0.9465);transform-origin:0 0;">Start</div>
<div style="position:absolute;left:1332.00px;top:144.99px;font:normal 400 13px 'Liberation Sans';line-height:13px;color:#252423;white-space:pre;transform:scaleX(0.9835);transform-origin:0 0;">float (hrs)</div>
<div style="position:absolute;left:1399.50px;top:144.99px;font:normal 400 13px 'Liberation Sans';line-height:13px;color:#252423;white-space:pre;transform:scaleX(0.9666);transform-origin:0 0;">Criticality Level</div>
<div style="position:absolute;left:798.00px;top:171.59px;font:normal 400 13px 'Liberation Sans';line-height:13px;color:#252423;white-space:pre;transform:scaleX(0.9500);transform-origin:0 0;">Pipelines</div>
<div style="position:absolute;left:903.90px;top:171.59px;font:normal 400 13px 'Liberation Sans';line-height:13px;color:#252423;white-space:pre;transform:scaleX(0.9300);transform-origin:0 0;">07_210</div>
<div style="position:absolute;left:972.50px;top:171.59px;font:normal 400 13px 'Liberation Sans';line-height:13px;color:#252423;white-space:pre;transform:scaleX(0.9650);transform-origin:0 0;">Pipelines Construction</div>
<div style="position:absolute;left:1254.70px;top:171.59px;font:normal 400 13px 'Liberation Sans';line-height:13px;color:#252423;white-space:pre;transform:scaleX(0.9925);transform-origin:0 0;">2022-04-14</div>
<div style="position:absolute;left:1382.07px;top:171.59px;font:normal 400 13px 'Liberation Sans';line-height:13px;color:#252423;white-space:pre;">0</div>
<div style="position:absolute;left:1399.50px;top:171.59px;font:normal 400 13px 'Liberation Sans';line-height:13px;color:#252423;white-space:pre;transform:scaleX(1.0215);transform-origin:0 0;">Critical (float&lt;=0h)</div>
<div style="position:absolute;left:798.00px;top:191.09px;font:normal 400 13px 'Liberation Sans';line-height:13px;color:#252423;white-space:pre;transform:scaleX(0.9500);transform-origin:0 0;">Pipelines</div>
<div style="position:absolute;left:903.90px;top:191.09px;font:normal 400 13px 'Liberation Sans';line-height:13px;color:#252423;white-space:pre;transform:scaleX(0.9300);transform-origin:0 0;">07_220</div>
<div style="position:absolute;left:972.50px;top:191.09px;font:normal 400 13px 'Liberation Sans';line-height:13px;color:#252423;white-space:pre;transform:scaleX(0.9650);transform-origin:0 0;">Final Tie-in complete</div>
<div style="position:absolute;left:1254.70px;top:191.09px;font:normal 400 13px 'Liberation Sans';line-height:13px;color:#252423;white-space:pre;transform:scaleX(0.9925);transform-origin:0 0;">2022-06-13</div>
<div style="position:absolute;left:1382.07px;top:191.09px;font:normal 400 13px 'Liberation Sans';line-height:13px;color:#252423;white-space:pre;">0</div>
<div style="position:absolute;left:1399.50px;top:191.09px;font:normal 400 13px 'Liberation Sans';line-height:13px;color:#252423;white-space:pre;transform:scaleX(1.0215);transform-origin:0 0;">Critical (float&lt;=0h)</div>
<div style="position:absolute;left:798.00px;top:210.59px;font:normal 400 13px 'Liberation Sans';line-height:13px;color:#252423;white-space:pre;transform:scaleX(0.9500);transform-origin:0 0;">Production</div>
<div style="position:absolute;left:903.90px;top:210.59px;font:normal 400 13px 'Liberation Sans';line-height:13px;color:#252423;white-space:pre;transform:scaleX(0.9300);transform-origin:0 0;">07_900</div>
<div style="position:absolute;left:972.50px;top:210.59px;font:normal 400 13px 'Liberation Sans';line-height:13px;color:#252423;white-space:pre;transform:scaleX(0.9650);transform-origin:0 0;">Ready for Production</div>
<div style="position:absolute;left:1254.70px;top:210.59px;font:normal 400 13px 'Liberation Sans';line-height:13px;color:#252423;white-space:pre;transform:scaleX(0.9925);transform-origin:0 0;">2022-06-13</div>
<div style="position:absolute;left:1382.07px;top:210.59px;font:normal 400 13px 'Liberation Sans';line-height:13px;color:#252423;white-space:pre;">0</div>
<div style="position:absolute;left:1399.50px;top:210.59px;font:normal 400 13px 'Liberation Sans';line-height:13px;color:#252423;white-space:pre;transform:scaleX(1.0215);transform-origin:0 0;">Critical (float&lt;=0h)</div>
<div style="position:absolute;left:798.00px;top:230.09px;font:normal 400 13px 'Liberation Sans';line-height:13px;color:#252423;white-space:pre;transform:scaleX(0.9500);transform-origin:0 0;">Production</div>
<div style="position:absolute;left:903.90px;top:230.09px;font:normal 400 13px 'Liberation Sans';line-height:13px;color:#252423;white-space:pre;transform:scaleX(0.9300);transform-origin:0 0;">08_005</div>
<div style="position:absolute;left:972.50px;top:230.09px;font:normal 400 13px 'Liberation Sans';line-height:13px;color:#252423;white-space:pre;transform:scaleX(0.9650);transform-origin:0 0;">In Production</div>
<div style="position:absolute;left:1254.70px;top:230.09px;font:normal 400 13px 'Liberation Sans';line-height:13px;color:#252423;white-space:pre;transform:scaleX(0.9925);transform-origin:0 0;">2022-06-13</div>
<div style="position:absolute;left:1382.07px;top:230.09px;font:normal 400 13px 'Liberation Sans';line-height:13px;color:#252423;white-space:pre;">0</div>
<div style="position:absolute;left:1399.50px;top:230.09px;font:normal 400 13px 'Liberation Sans';line-height:13px;color:#252423;white-space:pre;transform:scaleX(1.0215);transform-origin:0 0;">Critical (float&lt;=0h)</div>
<div style="position:absolute;left:798.00px;top:249.59px;font:normal 400 13px 'Liberation Sans';line-height:13px;color:#252423;white-space:pre;transform:scaleX(0.9500);transform-origin:0 0;">Regulatory</div>
<div style="position:absolute;left:903.90px;top:249.59px;font:normal 400 13px 'Liberation Sans';line-height:13px;color:#252423;white-space:pre;transform:scaleX(0.9300);transform-origin:0 0;">05_200</div>
<div style="position:absolute;left:972.50px;top:249.59px;font:normal 400 13px 'Liberation Sans';line-height:13px;color:#252423;white-space:pre;transform:scaleX(0.9650);transform-origin:0 0;">Obtain Pipeline Permit</div>
<div style="position:absolute;left:1254.70px;top:249.59px;font:normal 400 13px 'Liberation Sans';line-height:13px;color:#252423;white-space:pre;transform:scaleX(0.9925);transform-origin:0 0;">2022-03-25</div>
<div style="position:absolute;left:1382.07px;top:249.59px;font:normal 400 13px 'Liberation Sans';line-height:13px;color:#252423;white-space:pre;">0</div>
<div style="position:absolute;left:1399.50px;top:249.59px;font:normal 400 13px 'Liberation Sans';line-height:13px;color:#252423;white-space:pre;transform:scaleX(1.0215);transform-origin:0 0;">Critical (float&lt;=0h)</div>
<div style="position:absolute;left:798.00px;top:269.09px;font:normal 400 13px 'Liberation Sans';line-height:13px;color:#252423;white-space:pre;transform:scaleX(0.9500);transform-origin:0 0;">Surface Land</div>
<div style="position:absolute;left:903.90px;top:269.09px;font:normal 400 13px 'Liberation Sans';line-height:13px;color:#252423;white-space:pre;transform:scaleX(0.9300);transform-origin:0 0;">04_220</div>
<div style="position:absolute;left:972.50px;top:269.09px;font:normal 400 13px 'Liberation Sans';line-height:13px;color:#252423;white-space:pre;transform:scaleX(0.9650);transform-origin:0 0;">Develop &amp; Receive Plans - Pipeline</div>
<div style="position:absolute;left:1254.70px;top:269.09px;font:normal 400 13px 'Liberation Sans';line-height:13px;color:#252423;white-space:pre;transform:scaleX(0.9925);transform-origin:0 0;">2022-03-21</div>
<div style="position:absolute;left:1382.07px;top:269.09px;font:normal 400 13px 'Liberation Sans';line-height:13px;color:#252423;white-space:pre;">0</div>
<div style="position:absolute;left:1399.50px;top:269.09px;font:normal 400 13px 'Liberation Sans';line-height:13px;color:#252423;white-space:pre;transform:scaleX(1.0215);transform-origin:0 0;">Critical (float&lt;=0h)</div>
<div style="position:absolute;left:798.00px;top:288.59px;font:normal 400 13px 'Liberation Sans';line-height:13px;color:#252423;white-space:pre;transform:scaleX(0.9500);transform-origin:0 0;">Surface Land</div>
<div style="position:absolute;left:903.90px;top:288.59px;font:normal 400 13px 'Liberation Sans';line-height:13px;color:#252423;white-space:pre;transform:scaleX(0.9300);transform-origin:0 0;">04_230</div>
<div style="position:absolute;left:972.50px;top:288.59px;font:normal 400 13px 'Liberation Sans';line-height:13px;color:#252423;white-space:pre;transform:scaleX(0.9650);transform-origin:0 0;">Surface Acquisition - Pipeline</div>
<div style="position:absolute;left:1254.70px;top:288.59px;font:normal 400 13px 'Liberation Sans';line-height:13px;color:#252423;white-space:pre;transform:scaleX(0.9925);transform-origin:0 0;">2022-03-22</div>
<div style="position:absolute;left:1382.07px;top:288.59px;font:normal 400 13px 'Liberation Sans';line-height:13px;color:#252423;white-space:pre;">0</div>
<div style="position:absolute;left:1399.50px;top:288.59px;font:normal 400 13px 'Liberation Sans';line-height:13px;color:#252423;white-space:pre;transform:scaleX(1.0215);transform-origin:0 0;">Critical (float&lt;=0h)</div>
<div style="position:absolute;left:798.00px;top:308.09px;font:normal 400 13px 'Liberation Sans';line-height:13px;color:#252423;white-space:pre;transform:scaleX(0.9500);transform-origin:0 0;">Surface Land</div>
<div style="position:absolute;left:903.90px;top:308.09px;font:normal 400 13px 'Liberation Sans';line-height:13px;color:#252423;white-space:pre;transform:scaleX(0.9300);transform-origin:0 0;">04_260</div>
<div style="position:absolute;left:972.50px;top:308.09px;font:normal 400 13px 'Liberation Sans';line-height:13px;color:#252423;white-space:pre;transform:scaleX(0.9650);transform-origin:0 0;">Ready to Permit - Pipeline</div>
<div style="position:absolute;left:1254.70px;top:308.09px;font:normal 400 13px 'Liberation Sans';line-height:13px;color:#252423;white-space:pre;transform:scaleX(0.9925);transform-origin:0 0;">2022-03-24</div>
<div style="position:absolute;left:1382.07px;top:308.09px;font:normal 400 13px 'Liberation Sans';line-height:13px;color:#252423;white-space:pre;">0</div>
<div style="position:absolute;left:1399.50px;top:308.09px;font:normal 400 13px 'Liberation Sans';line-height:13px;color:#252423;white-space:pre;transform:scaleX(1.0215);transform-origin:0 0;">Critical (float&lt;=0h)</div>
<div style="position:absolute;left:798.00px;top:327.59px;font:normal 400 13px 'Liberation Sans';line-height:13px;color:#252423;white-space:pre;transform:scaleX(0.9500);transform-origin:0 0;">AFE</div>
<div style="position:absolute;left:903.90px;top:327.59px;font:normal 400 13px 'Liberation Sans';line-height:13px;color:#252423;white-space:pre;transform:scaleX(0.9300);transform-origin:0 0;">02_C10</div>
<div style="position:absolute;left:972.50px;top:327.59px;font:normal 400 13px 'Liberation Sans';line-height:13px;color:#252423;white-space:pre;transform:scaleX(0.9650);transform-origin:0 0;">AFE Creation to Release by ML to Ops - C AFE</div>
<div style="position:absolute;left:1254.70px;top:327.59px;font:normal 400 13px 'Liberation Sans';line-height:13px;color:#252423;white-space:pre;transform:scaleX(1.0069);transform-origin:0 0;">2021-11-25</div>
<div style="position:absolute;left:1382.07px;top:327.59px;font:normal 400 13px 'Liberation Sans';line-height:13px;color:#252423;white-space:pre;">8</div>
<div style="position:absolute;left:1399.50px;top:327.59px;font:normal 400 13px 'Liberation Sans';line-height:13px;color:#252423;white-space:pre;transform:scaleX(1.0174);transform-origin:0 0;">Near-Critical (float&lt;=50h)</div>
<div style="position:absolute;left:798.00px;top:347.09px;font:normal 400 13px 'Liberation Sans';line-height:13px;color:#252423;white-space:pre;transform:scaleX(0.9500);transform-origin:0 0;">AFE</div>
<div style="position:absolute;left:903.90px;top:347.09px;font:normal 400 13px 'Liberation Sans';line-height:13px;color:#252423;white-space:pre;transform:scaleX(0.9300);transform-origin:0 0;">02_D10</div>
<div style="position:absolute;left:972.50px;top:347.09px;font:normal 400 13px 'Liberation Sans';line-height:13px;color:#252423;white-space:pre;transform:scaleX(0.9650);transform-origin:0 0;">AFE Creation to Release by ML to Ops - D AFE</div>
<div style="position:absolute;left:1254.70px;top:347.09px;font:normal 400 13px 'Liberation Sans';line-height:13px;color:#252423;white-space:pre;transform:scaleX(0.9925);transform-origin:0 0;">2021-10-15</div>
<div style="position:absolute;left:1382.07px;top:347.09px;font:normal 400 13px 'Liberation Sans';line-height:13px;color:#252423;white-space:pre;">8</div>
<div style="position:absolute;left:1399.50px;top:347.09px;font:normal 400 13px 'Liberation Sans';line-height:13px;color:#252423;white-space:pre;transform:scaleX(1.0174);transform-origin:0 0;">Near-Critical (float&lt;=50h)</div>
<div style="position:absolute;left:798.00px;top:366.59px;font:normal 400 13px 'Liberation Sans';line-height:13px;color:#252423;white-space:pre;transform:scaleX(0.9500);transform-origin:0 0;">AFE</div>
<div style="position:absolute;left:903.90px;top:366.59px;font:normal 400 13px 'Liberation Sans';line-height:13px;color:#252423;white-space:pre;transform:scaleX(0.9300);transform-origin:0 0;">02_G10</div>
<div style="position:absolute;left:972.50px;top:366.59px;font:normal 400 13px 'Liberation Sans';line-height:13px;color:#252423;white-space:pre;transform:scaleX(0.9650);transform-origin:0 0;">AFE Creation to Release - Gathering AFE</div>
<div style="position:absolute;left:1254.70px;top:366.59px;font:normal 400 13px 'Liberation Sans';line-height:13px;color:#252423;white-space:pre;transform:scaleX(0.9925);transform-origin:0 0;">2022-01-06</div>
<div style="position:absolute;left:1382.07px;top:366.59px;font:normal 400 13px 'Liberation Sans';line-height:13px;color:#252423;white-space:pre;">8</div>
<div style="position:absolute;left:1399.50px;top:366.59px;font:normal 400 13px 'Liberation Sans';line-height:13px;color:#252423;white-space:pre;transform:scaleX(1.0174);transform-origin:0 0;">Near-Critical (float&lt;=50h)</div>
<div style="position:absolute;left:798.00px;top:386.09px;font:normal 400 13px 'Liberation Sans';line-height:13px;color:#252423;white-space:pre;transform:scaleX(0.9500);transform-origin:0 0;">AFE</div>
<div style="position:absolute;left:903.90px;top:386.09px;font:normal 400 13px 'Liberation Sans';line-height:13px;color:#252423;white-space:pre;transform:scaleX(0.9300);transform-origin:0 0;">02_G60</div>
<div style="position:absolute;left:972.50px;top:386.09px;font:normal 400 13px 'Liberation Sans';line-height:13px;color:#252423;white-space:pre;transform:scaleX(0.9650);transform-origin:0 0;">Internal to External Approval - Gathering AFE</div>
<div style="position:absolute;left:1254.70px;top:386.09px;font:normal 400 13px 'Liberation Sans';line-height:13px;color:#252423;white-space:pre;transform:scaleX(0.9925);transform-origin:0 0;">2022-02-22</div>
<div style="position:absolute;left:1382.07px;top:386.09px;font:normal 400 13px 'Liberation Sans';line-height:13px;color:#252423;white-space:pre;">8</div>
<div style="position:absolute;left:1399.50px;top:386.09px;font:normal 400 13px 'Liberation Sans';line-height:13px;color:#252423;white-space:pre;transform:scaleX(1.0174);transform-origin:0 0;">Near-Critical (float&lt;=50h)</div>
<div style="position:absolute;left:61.90px;top:449.39px;font:normal 400 13px 'Liberation Sans';line-height:13px;color:#a8a8a8;white-space:pre;transform:scaleX(0.8832);transform-origin:0 0;">Collapse All</div>
<div style="position:absolute;left:417.20px;top:445.53px;font:normal 400 10px 'Liberation Sans';line-height:10px;color:#252525;white-space:pre;transform:scaleX(0.9483);transform-origin:0 0;">Nov 2021</div>
<div style="position:absolute;left:569.60px;top:445.53px;font:normal 400 10px 'Liberation Sans';line-height:10px;color:#252525;white-space:pre;transform:scaleX(0.9483);transform-origin:0 0;">Dec 2021</div>
<div style="position:absolute;left:726.40px;top:445.53px;font:normal 400 10px 'Liberation Sans';line-height:10px;color:#252525;white-space:pre;transform:scaleX(0.9865);transform-origin:0 0;">Jan 2022</div>
<div style="position:absolute;left:883.70px;top:445.53px;font:normal 400 10px 'Liberation Sans';line-height:10px;color:#252525;white-space:pre;transform:scaleX(0.9606);transform-origin:0 0;">Feb 2022</div>
<div style="position:absolute;left:1026.00px;top:445.53px;font:normal 400 10px 'Liberation Sans';line-height:10px;color:#252525;white-space:pre;transform:scaleX(0.9609);transform-origin:0 0;">Mar 2022</div>
<div style="position:absolute;left:1183.00px;top:445.53px;font:normal 400 10px 'Liberation Sans';line-height:10px;color:#252525;white-space:pre;">Apr 2022</div>
<div style="position:absolute;left:1335.40px;top:445.53px;font:normal 400 10px 'Liberation Sans';line-height:10px;color:#252525;white-space:pre;transform:scaleX(0.9244);transform-origin:0 0;">May 2022</div>
<div style="position:absolute;left:1492.70px;top:445.53px;font:normal 400 10px 'Liberation Sans';line-height:10px;color:#252525;white-space:pre;transform:scaleX(0.9865);transform-origin:0 0;">Jun 2022</div>
<div style="position:absolute;left:595.70px;top:883.89px;font:normal 400 11px 'Liberation Sans';line-height:11px;color:#4a4a4a;white-space:pre;transform:scaleX(0.9234);transform-origin:0 0;">Criticality Level</div>
<div style="position:absolute;left:690.40px;top:883.89px;font:normal 400 11px 'Liberation Sans';line-height:11px;color:#4a4a4a;white-space:pre;transform:scaleX(0.9613);transform-origin:0 0;">Critical (float&lt;=0h)</div>
<div style="position:absolute;left:794.30px;top:883.89px;font:normal 400 11px 'Liberation Sans';line-height:11px;color:#4a4a4a;white-space:pre;transform:scaleX(0.9555);transform-origin:0 0;">Near-Critical (float&lt;=50h)</div>
<div style="position:absolute;left:929.70px;top:883.89px;font:normal 400 11px 'Liberation Sans';line-height:11px;color:#4a4a4a;white-space:pre;transform:scaleX(0.9679);transform-origin:0 0;">Not-Critical (float&gt;50h)</div>
</body></html>
